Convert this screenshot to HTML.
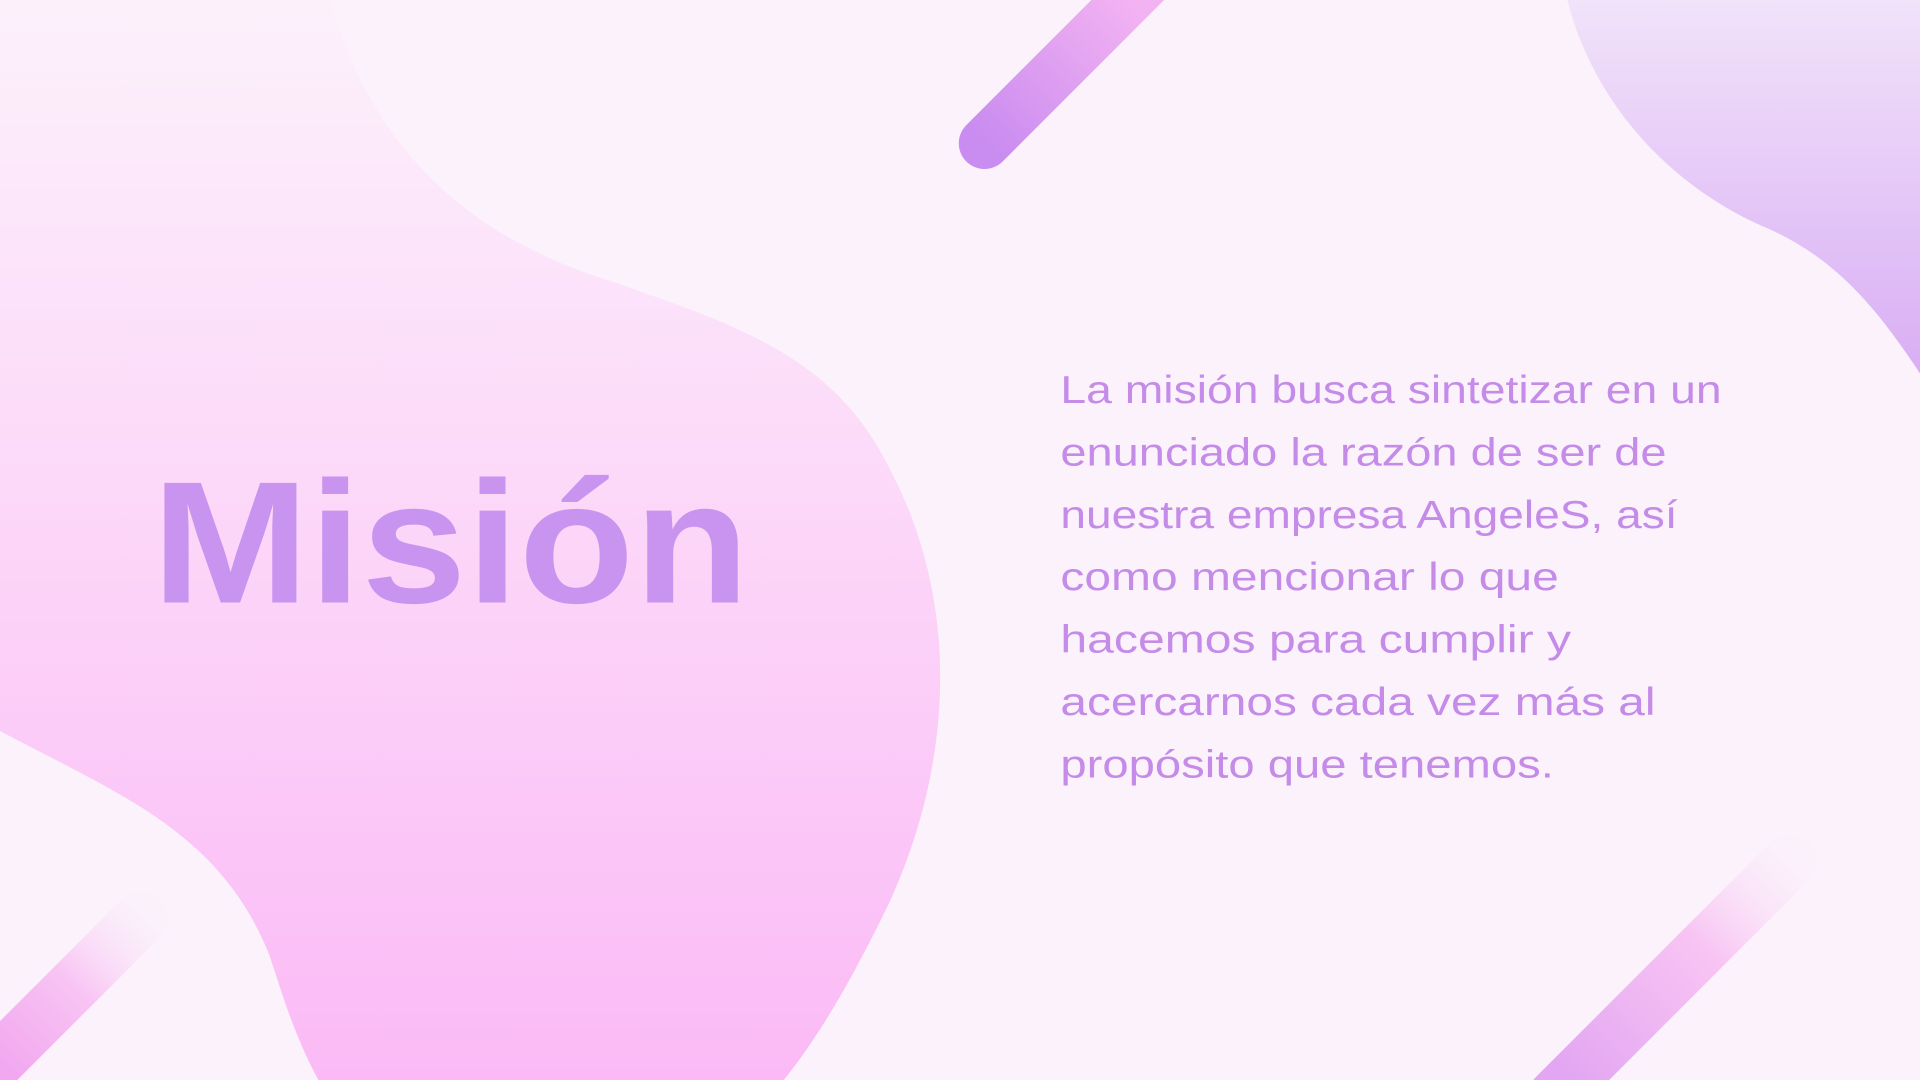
<!DOCTYPE html>
<html><head><meta charset="utf-8"><style>
html,body{margin:0;padding:0;width:1920px;height:1080px;overflow:hidden;background:#fbf2fb}
svg{display:block}
</style></head><body>
<svg width="1920" height="1080" viewBox="0 0 1568 882" xmlns="http://www.w3.org/2000/svg">
<defs>
<linearGradient id="blob" x1="0" y1="0" x2="0" y2="1">
<stop offset="0" stop-color="#fcf1fb"/><stop offset="1" stop-color="#fbbaf6"/></linearGradient>
<linearGradient id="tr" x1="0" y1="0" x2="0" y2="1">
<stop offset="0" stop-color="#f1e3fa"/><stop offset="1" stop-color="#d9aef4"/></linearGradient>
<linearGradient id="l1" x1="804" y1="117" x2="920" y2="0" gradientUnits="userSpaceOnUse">
<stop offset="0" stop-color="#c98cf0"/><stop offset="1" stop-color="#f3b2f2"/></linearGradient>
<linearGradient id="l2" x1="1465" y1="700" x2="1280" y2="882" gradientUnits="userSpaceOnUse">
<stop offset="0" stop-color="#fbeefb" stop-opacity="0.3"/><stop offset="0.4" stop-color="#f8c4f3"/><stop offset="1" stop-color="#e2a6f2"/></linearGradient>
<linearGradient id="l3" x1="120" y1="745" x2="0" y2="865" gradientUnits="userSpaceOnUse">
<stop offset="0" stop-color="#fbeefb" stop-opacity="0.3"/><stop offset="0.5" stop-color="#f8c4f3"/><stop offset="1" stop-color="#f2a8f0"/></linearGradient>
</defs>
<rect width="1568" height="882" fill="#fbf2fb"/>
<path d="M270 0 C300 110 370 190 500 230 C600 265 680 290 725 380 C790 500 775 640 720 750 C695 800 670 845 640 882 L260 882 C240 845 230 810 220 780 C180 680 100 650 0 597 L0 0 Z" fill="url(#blob)"/>
<path d="M1280 0 C1300 80 1360 150 1440 185 C1500 210 1535 255 1568 305 L1568 0 Z" fill="url(#tr)"/>
<line x1="804" y1="117" x2="935" y2="-14" stroke="url(#l1)" stroke-width="42" stroke-linecap="round"/>
<line x1="1462" y1="703" x2="1270" y2="895" stroke="url(#l2)" stroke-width="44" stroke-linecap="round"/>
<line x1="115" y1="750" x2="-10" y2="875" stroke="url(#l3)" stroke-width="44" stroke-linecap="round"/>
<text x="124" y="492" font-family="Liberation Sans, sans-serif" font-weight="bold" font-size="142" fill="#c994f0" textLength="488" lengthAdjust="spacingAndGlyphs">Misión</text>
<g font-family="Liberation Sans, sans-serif" font-size="32" fill="#c58be8">
<text x="866" y="329" textLength="540" lengthAdjust="spacingAndGlyphs">La misión busca sintetizar en un</text>
<text x="866" y="380" textLength="495" lengthAdjust="spacingAndGlyphs">enunciado la razón de ser de</text>
<text x="866" y="431" textLength="504" lengthAdjust="spacingAndGlyphs">nuestra empresa AngeleS, así</text>
<text x="866" y="482" textLength="407" lengthAdjust="spacingAndGlyphs">como mencionar lo que</text>
<text x="866" y="533" textLength="417" lengthAdjust="spacingAndGlyphs">hacemos para cumplir y</text>
<text x="866" y="584" textLength="486" lengthAdjust="spacingAndGlyphs">acercarnos cada vez más al</text>
<text x="866" y="635" textLength="403" lengthAdjust="spacingAndGlyphs">propósito que tenemos.</text>
</g>
</svg>
</body></html>
